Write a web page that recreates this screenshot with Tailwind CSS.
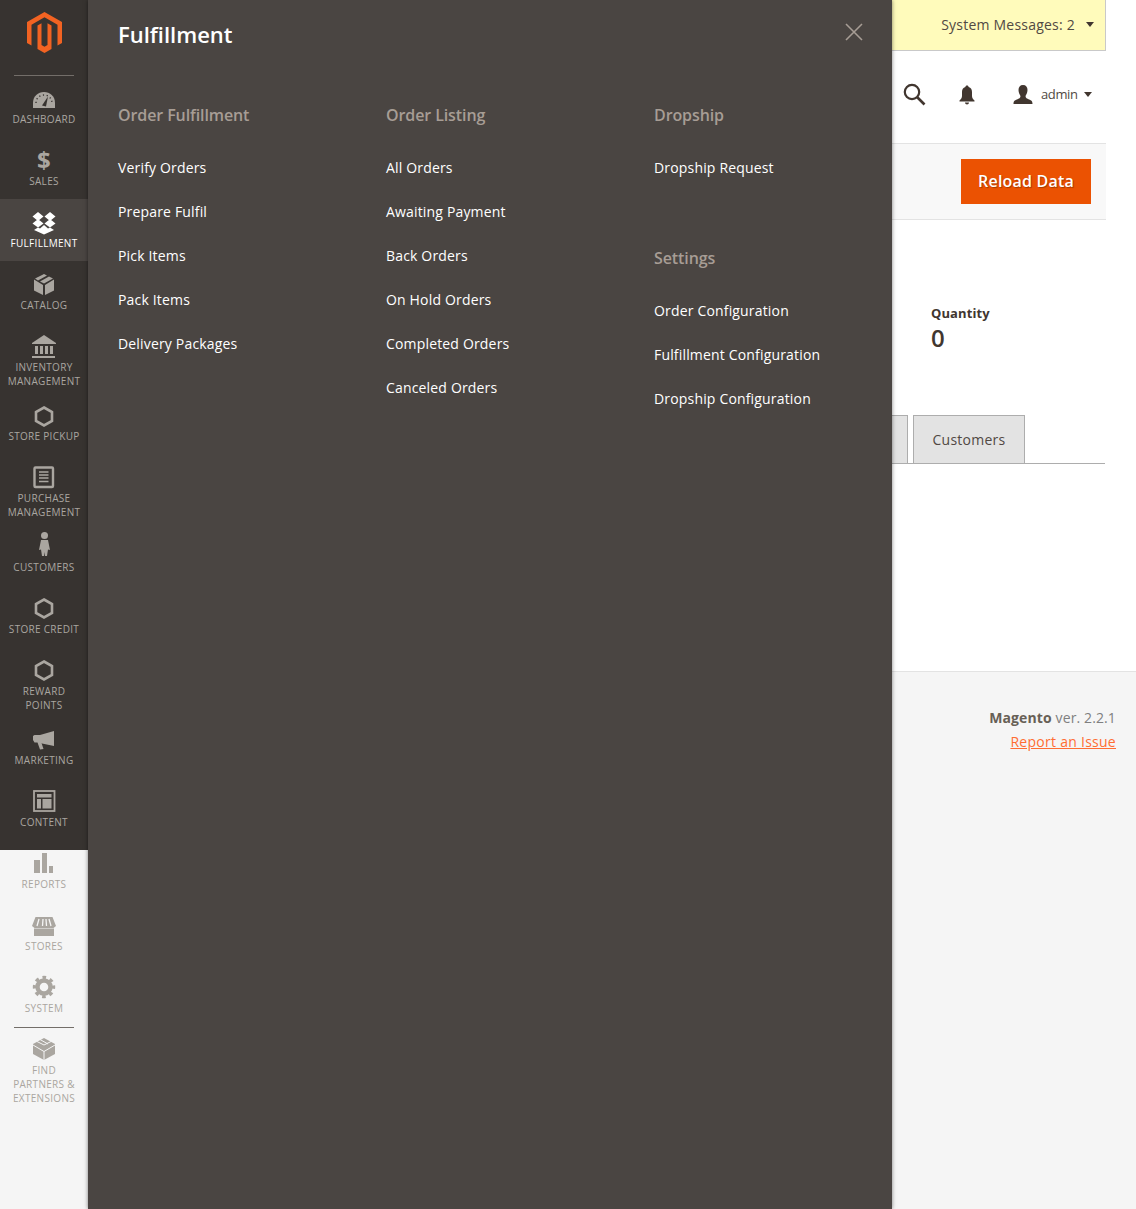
<!doctype html>
<html lang="en">
  <head>
    <meta charset="UTF-8" />
    <title>Fulfillment</title>
    <script src="https://cdn.jsdelivr.net/npm/@tailwindcss/browser@4"></script>
  </head>
  <body class="bg-white font-['Open_Sans',sans-serif] text-[#41362f]">
    <div class="flex h-[1209px] w-[1136px] overflow-hidden">
      <!-- sidebar -->
      <nav class="w-[88px] shrink-0 bg-[#f5f5f5] text-center text-[10px] leading-[14px] uppercase tracking-[0.3px] text-[#aaa6a0]">
        <div class="h-[850px] bg-[#373330]">
          <div class="flex h-[75px] items-start justify-center pt-[12px] pl-[1px]">
            <svg width="35" height="41" viewBox="0 0 35 41"><path fill="#f26322" d="M17.5 0L35 10V31L30.5 33.6V12.7L17.5 5.3L4.5 12.7V33.6L0 31V10ZM17.5 41L10.5 37V13.5L14.5 11.2V33L17.5 34.8L20.5 33V11.2L24.5 13.5V37Z"/></svg>
          </div>
          <div class="mx-[14px] h-px bg-[#736e69]"></div>

          <a class="block h-[61px]">
            <svg class="mx-auto" width="44" height="36" viewBox="0 0 44 36"><path fill="#aaa6a0" d="M11 32V27C11 20 16 16 22 16S33 20 33 27V32Z"/><path fill="none" stroke="#373330" stroke-width="1.4" stroke-dasharray="1.2 2.6" d="M14 27C14 22 18 19 22 19S30 22 30 27"/><path fill="#373330" d="M20 29.5L26 20.5L24 30.5Z"/></svg>
            <span class="block">Dashboard</span>
          </a>
          <a class="block h-[62px]">
            <svg class="mx-auto overflow-visible" width="44" height="37" viewBox="0 0 44 37"><text x="22" y="32" text-anchor="middle" fill="#aaa6a0" font-size="24" font-weight="700" font-family="Open Sans">$</text></svg>
            <span class="block">Sales</span>
          </a>
          <a class="block h-[62px] bg-[#4a4542] text-white">
            <svg class="mx-auto" width="44" height="37" viewBox="0 0 44 37"><path fill="#fff" d="M16 13L21.5 17.5L16 22L10.5 17.5ZM28 13L33.5 17.5L28 22L22.5 17.5ZM16 20L21.5 24.5L16 28.5L10.5 24.5ZM28 20L33.5 24.5L28 28.5L22.5 24.5ZM22 26L26 29.5L28 28.5L32 31L22 35.5L12 31L16 28.5L18 29.5Z"/></svg>
            <span class="block">Fulfillment</span>
          </a>
          <a class="block h-[62px]">
            <svg class="mx-auto" width="44" height="37" viewBox="0 0 44 37"><path fill="#aaa6a0" d="M12 18.5L21 24V34L12 29.5ZM32 18.5V29.5L23 34V24ZM22 13L25 14.5L16 19.5L13 17.5ZM27 15.5L31 17.5L22 22.5L18 20.5Z"/></svg>
            <span class="block">Catalog</span>
          </a>
          <a class="block h-[69px]">
            <svg class="mx-auto" width="44" height="37" viewBox="0 0 44 37"><path fill="#aaa6a0" d="M22 12L34 20V21H10V20ZM13 23H16V31H13ZM18 23H21V31H18ZM23 23H26V31H23ZM28 23H31V31H28ZM10 33H33V35H10Z"/></svg>
            <span class="block">Inventory<br />Management</span>
          </a>
          <a class="block h-[62px]">
            <svg class="mx-auto" width="44" height="37" viewBox="0 0 44 37"><path fill="none" stroke="#aaa6a0" stroke-width="2.6" d="M22 15.5L30 20V29L22 33.5L14 29V20Z"/></svg>
            <span class="block">Store Pickup</span>
          </a>
          <a class="block h-[69px]">
            <svg class="mx-auto" width="44" height="37" viewBox="0 0 44 37"><rect x="12.5" y="13.5" width="18.5" height="19.5" rx="1" fill="none" stroke="#aaa6a0" stroke-width="2.4"/><path stroke="#aaa6a0" stroke-width="1.3" d="M17 18H26.5M17 21H26.5M17 24H26.5M17 27.5H26.5"/></svg>
            <span class="block">Purchase<br />Management</span>
          </a>
          <a class="block h-[62px]">
            <svg class="mx-auto" width="44" height="37" viewBox="0 0 44 37"><circle cx="22.5" cy="12.5" r="3.5" fill="#aaa6a0"/><path fill="#aaa6a0" d="M19 17H26L28 27L26 26.5L25 33H23L22.5 29L22 33H20L19 26.5L17 27Z"/></svg>
            <span class="block">Customers</span>
          </a>
          <a class="block h-[62px]">
            <svg class="mx-auto" width="44" height="37" viewBox="0 0 44 37"><path fill="none" stroke="#aaa6a0" stroke-width="2.6" d="M22 14.5L30 19V28L22 32.5L14 28V19Z"/></svg>
            <span class="block">Store Credit</span>
          </a>
          <a class="block h-[69px]">
            <svg class="mx-auto" width="44" height="37" viewBox="0 0 44 37"><path fill="none" stroke="#aaa6a0" stroke-width="2.6" d="M22 14.5L30 19V28L22 32.5L14 28V19Z"/></svg>
            <span class="block">Reward<br />Points</span>
          </a>
          <a class="block h-[62px]">
            <svg class="mx-auto" width="44" height="37" viewBox="0 0 44 37"><path fill="#aaa6a0" d="M32 15V30L20 27.5L19.5 27L21.5 33L18 33.5L15.5 26.5H12.5L11 24V20L12.5 19H18Z"/></svg>
            <span class="block">Marketing</span>
          </a>
          <a class="block">
            <svg class="mx-auto" width="44" height="37" viewBox="0 0 44 37"><rect x="12" y="13" width="20.5" height="20" fill="none" stroke="#aaa6a0" stroke-width="1.8"/><path fill="#aaa6a0" d="M15 16H29.5V19.5H15ZM15 21H19V30.5H15ZM20.5 21H29.5V30.5H20.5Z"/></svg>
            <span class="block">Content</span>
          </a>
        </div>

        <a class="block h-[52px]">
          <svg class="mx-auto" width="44" height="27" viewBox="0 0 44 27"><path fill="#aaa6a0" d="M12 10H18V23H12ZM20 3H25V23H20ZM27 16H31V23H27Z"/></svg>
          <span class="block">Reports</span>
        </a>
        <a class="block h-[62px]">
          <svg class="mx-auto" width="44" height="37" viewBox="0 0 44 37"><path fill="#aaa6a0" d="M13.5 15H30.5L34 24L31.5 26H12.5L10 24ZM12 26.5H32V34H12Z"/><path stroke="#f5f5f5" stroke-width="1.3" d="M17 17L15 24M21 17L20.5 24M24 17L24.5 24M27 17L29 24"/></svg>
          <span class="block">Stores</span>
        </a>
        <a class="block h-[62px]">
          <svg class="mx-auto" width="44" height="37" viewBox="0 0 44 37"><circle cx="22" cy="23" r="6.5" fill="none" stroke="#aaa6a0" stroke-width="4.4"/><circle cx="22" cy="23" r="9.5" fill="none" stroke="#aaa6a0" stroke-width="3.4" stroke-dasharray="3.6 3.86" stroke-dashoffset="1.8"/></svg>
          <span class="block">System</span>
        </a>
        <a class="block">
          <div class="mx-[14px] h-px translate-y-[1px] bg-[#736e69]"></div>
          <svg class="mx-auto -mt-px" width="44" height="37" viewBox="0 0 44 37"><path fill="#aaa6a0" d="M22 12L33 18V28L22 34L11 28V18Z"/><path fill="none" stroke="#f5f5f5" stroke-width="1" d="M11 19L22 25.5L33 19M22 25.5V34M15 15.5L22 19L29 15.5M18 13.5L26 18"/></svg>
          <span class="block">Find<br />Partners &amp;<br />Extensions</span>
        </a>
      </nav>

      <!-- open submenu -->
      <section class="z-10 h-full w-[804px] shrink-0 bg-[#4a4542] pl-[30px] shadow-[0_0_4px_rgba(0,0,0,0.5)]">
        <div class="flex h-[70px] items-start justify-between pr-[29px]">
          <h2 class="pt-[18px] text-[22px] leading-[32px] font-semibold text-white">Fulfillment</h2>
          <svg class="mt-[23px]" width="18" height="18" viewBox="0 0 18 18"><path stroke="#a79d95" stroke-width="1.6" d="M1 1L17 17M17 1L1 17"/></svg>
        </div>
        <div class="grid grid-cols-[268px_268px_200px] pt-[33px] text-[14px] leading-[20px] tracking-[0.17px] text-white">
          <div>
            <h3 class="mb-[31px] text-[16px] leading-[24px] font-semibold tracking-[-0.1px] text-[#a79d95]">Order Fulfillment</h3>
            <ul class="flex flex-col gap-[24px]">
              <li>Verify Orders</li>
              <li>Prepare Fulfil</li>
              <li>Pick Items</li>
              <li>Pack Items</li>
              <li>Delivery Packages</li>
            </ul>
          </div>
          <div>
            <h3 class="mb-[31px] text-[16px] leading-[24px] font-semibold tracking-[-0.1px] text-[#a79d95]">Order Listing</h3>
            <ul class="flex flex-col gap-[24px]">
              <li>All Orders</li>
              <li>Awaiting Payment</li>
              <li>Back Orders</li>
              <li>On Hold Orders</li>
              <li>Completed Orders</li>
              <li>Canceled Orders</li>
            </ul>
          </div>
          <div>
            <h3 class="mb-[31px] text-[16px] leading-[24px] font-semibold tracking-[-0.1px] text-[#a79d95]">Dropship</h3>
            <ul class="flex flex-col gap-[24px]">
              <li>Dropship Request</li>
            </ul>
            <h3 class="mt-[68px] mb-[31px] text-[16px] leading-[24px] font-semibold tracking-[-0.1px] text-[#a79d95]">Settings</h3>
            <ul class="flex flex-col gap-[24px]">
              <li>Order Configuration</li>
              <li>Fulfillment Configuration</li>
              <li>Dropship Configuration</li>
            </ul>
          </div>
        </div>
      </section>

      <!-- page behind the menu -->
      <main class="flex min-w-0 flex-1 flex-col">
        <div class="flex h-[51px] w-[214px] items-center justify-end gap-[11px] border-r border-b border-[#c9c9c9] bg-[#fffbbb] pr-[11px] pb-[2px] text-[14px] tracking-[0.22px]">
          <span class="text-[#514943]">System Messages: 2</span>
          <span class="h-0 w-0 border-x-[4px] border-t-[5px] border-x-transparent border-t-[#41362f]"></span>
        </div>
        <div class="flex h-[92px] w-[214px] items-center pb-[5px] pl-[11px]">
          <svg width="23" height="23" viewBox="0 0 23 23"><circle cx="9" cy="9" r="7.2" fill="none" stroke="#41362f" stroke-width="2.2"/><path stroke="#41362f" stroke-width="2.6" d="M14 14L21.5 21.5"/></svg>
          <svg class="ml-[32px]" width="18" height="20" viewBox="0 0 18 20"><path fill="#41362f" d="M9 0.5C10 0.5 10.6 1.2 10.6 2C13 2.8 14 4.5 14 7V11C14 13 15 14 16.5 15.5V16.5H1.5V15.5C3 14 4 13 4 11V7C4 4.5 5 2.8 7.4 2C7.4 1.2 8 0.5 9 0.5ZM7 17.5H11C11 18.7 10 19.5 9 19.5S7 18.7 7 17.5Z"/></svg>
          <svg class="ml-[37px]" width="20" height="20" viewBox="0 0 20 20"><path fill="#41362f" d="M10 0C13 0 14.5 2 14.5 5C14.5 8 13 10 12.5 11C12.5 13 14 13.5 16 14.5C18.5 15.5 19.5 16 19.5 19H0.5C0.5 16 1.5 15.5 4 14.5C6 13.5 7.5 13 7.5 11C7 10 5.5 8 5.5 5C5.5 2 7 0 10 0Z"/></svg>
          <span class="ml-[8px] text-[13px] tracking-[-0.4px] text-[#514943]">admin</span>
          <span class="ml-[7px] h-0 w-0 border-x-[4px] border-t-[5px] border-x-transparent border-t-[#41362f]"></span>
        </div>
        <div class="flex h-[77px] w-[214px] items-center justify-end border-y border-[#e3e3e3] bg-[#f8f8f8] pr-[15px]">
          <button class="flex h-[45px] w-[130px] items-center justify-center bg-[#eb5202] pb-[2px] text-[16px] font-semibold tracking-[0.2px] text-white [text-shadow:1px_1px_1px_rgba(0,0,0,0.3)]">Reload Data</button>
        </div>
        <div class="h-[451px] overflow-hidden pt-[84px]">
          <div class="pl-[39px]">
            <div class="text-[13px] leading-[18px] font-bold tracking-[0.1px]">Quantity</div>
            <div class="text-[24px] leading-[32px] font-semibold">0</div>
          </div>
          <div class="mt-[61px] flex h-[49px] w-[213px] gap-[5px] border-b border-[#adadad]">
            <div class="h-[48px] w-[16px] border-t border-r border-[#adadad] bg-[#e3e3e3]"></div>
            <div class="flex h-[48px] w-[112px] items-center justify-center border-x border-t border-[#adadad] bg-[#e3e3e3] text-[14px] tracking-[0.25px] text-[#514943]">Customers</div>
          </div>
        </div>
        <footer class="flex-1 border-t border-[#e3e3e3] bg-[#f5f5f5] pt-[34px] pr-[20px] text-right text-[14px] leading-[24px] tracking-[0.12px] text-[#7f7f7f]">
          <div><b class="font-bold text-[#676056]">Magento</b> ver. 2.2.1</div>
          <a class="tracking-[0.27px] text-[#ff6d33] underline">Report an Issue</a>
        </footer>
      </main>
    </div>
  </body>
</html>
